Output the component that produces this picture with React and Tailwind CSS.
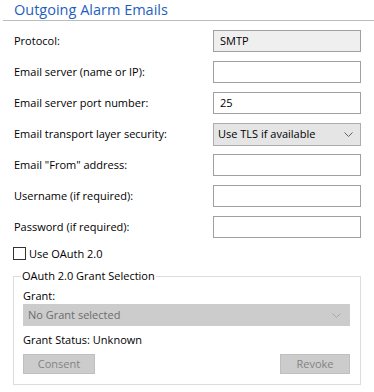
import React from "react";

const Chevron = ({ color = "#606060" }) => (
  <svg width="9" height="5" viewBox="0 0 9 5" fill="none">
    <path d="M0.5 0.5 L4.5 4.5 L8.5 0.5" stroke={color} strokeWidth="1" />
  </svg>
);

function Row({ label, children }) {
  return (
    <div className="flex items-center h-[22px]">
      <div className="w-[213px] shrink-0 pl-[14px] text-[11px] leading-[16px] text-black">{label}</div>
      {children}
    </div>
  );
}

const Box = ({ children, className = "" }) => (
  <div className={`w-[148px] h-[22px] shrink-0 border border-[#a0a0a0] flex items-center px-[6px] text-[11px] leading-[16px] text-black ${className}`}>
    {children}
  </div>
);

export default function App() {
  return (
    <div
      className="w-[374px] h-[392px] bg-white overflow-hidden"
      style={{ fontFamily: '"Open Sans", "Noto Sans", sans-serif' }}
    >
      <div className="h-[20px] pl-[14px] text-[14.5px] leading-[20px] text-[#1f5fbf]">Outgoing Alarm Emails</div>
      <div className="ml-[3px] h-px bg-[#bcbcbc]" />
      <div className="flex flex-col gap-[9px] mt-[9px]">
        <Row label="Protocol:">
          <Box className="bg-[#efefef]">SMTP</Box>
        </Row>
        <Row label="Email server (name or IP):">
          <Box className="bg-white" />
        </Row>
        <Row label="Email server port number:">
          <Box className="bg-white">25</Box>
        </Row>
        <Row label="Email transport layer security:">
          <div className="w-[148px] h-[23px] shrink-0 border border-[#acacac] bg-[#e5e5e5] flex items-center justify-between pl-[4px] pr-[7px] text-[11px] leading-[16px] text-black">
            <span>Use TLS if available</span>
            <Chevron />
          </div>
        </Row>
        <Row label={'Email "From" address:'}>
          <Box className="bg-white" />
        </Row>
        <Row label="Username (if required):">
          <Box className="bg-white" />
        </Row>
        <Row label="Password (if required):">
          <Box className="bg-white" />
        </Row>
      </div>
      <div className="flex items-center mt-[9px] ml-[13px] h-[13px]">
        <div className="w-[13px] h-[13px] border border-[#333333] bg-white" />
        <span className="ml-[3px] text-[11px] leading-[16px] text-black">Use OAuth 2.0</span>
      </div>
      <div className="relative mt-[16px] ml-[13px] w-[348px] h-[109px] border border-[#dcdcdc]">
        <div className="absolute left-[7px] top-[-9px] bg-white px-[1px] text-[11px] leading-[16px] text-black">
          OAuth 2.0 Grant Selection
        </div>
        <div className="flex flex-col pl-[9px] pr-[10px] pt-[11px]">
          <div className="text-[11px] leading-[16px] text-black">Grant:</div>
          <div className="h-[22px] border border-[#cccccc] bg-[#cccccc] flex items-center justify-between pl-[4px] pr-[8px] text-[11px] leading-[16px] text-[#6d6d6d]">
            <span>No Grant selected</span>
            <Chevron color="#a8a8a8" />
          </div>
          <div className="mt-[6px] text-[11px] leading-[16px] text-black">Grant Status: Unknown</div>
          <div className="mt-[6px] flex justify-between">
            <div className="w-[72px] h-[20px] border border-[#bfbfbf] bg-[#cccccc] flex items-center justify-center text-[11px] leading-[16px] text-[#838383]">
              Consent
            </div>
            <div className="w-[70px] h-[20px] border border-[#bfbfbf] bg-[#cccccc] flex items-center justify-center text-[11px] leading-[16px] text-[#838383]">
              Revoke
            </div>
          </div>
        </div>
      </div>
    </div>
  );
}
